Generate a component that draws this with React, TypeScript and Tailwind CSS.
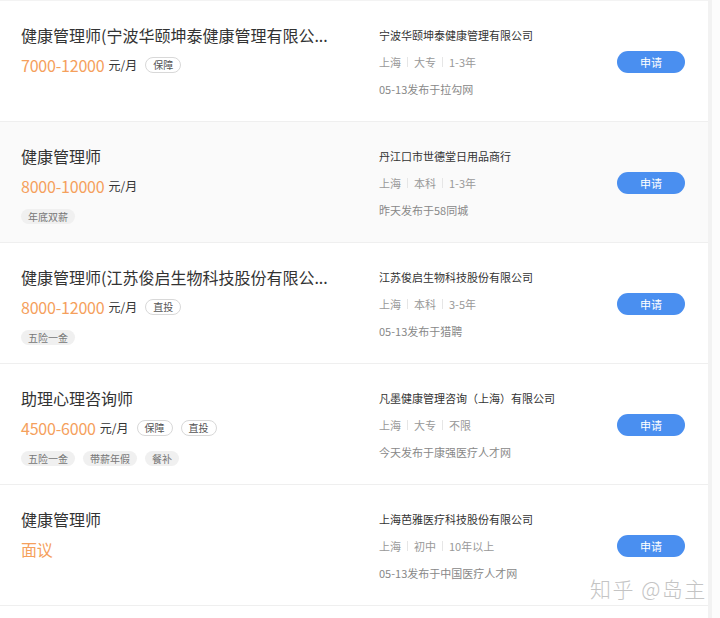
import React from "react";

type Job = {
  title: string;
  salary: string;
  unit?: boolean;
  badges: string[];
  tags: string[];
  company: string;
  meta: string[];
  source: string;
  gray?: boolean;
};

const jobs: Job[] = [
  {
    title: "健康管理师(宁波华颐坤泰健康管理有限公...",
    salary: "7000-12000",
    unit: true,
    badges: ["保障"],
    tags: [],
    company: "宁波华颐坤泰健康管理有限公司",
    meta: ["上海", "大专", "1-3年"],
    source: "05-13发布于拉勾网",
  },
  {
    title: "健康管理师",
    salary: "8000-10000",
    unit: true,
    badges: [],
    tags: ["年底双薪"],
    company: "丹江口市世德堂日用品商行",
    meta: ["上海", "本科", "1-3年"],
    source: "昨天发布于58同城",
    gray: true,
  },
  {
    title: "健康管理师(江苏俊启生物科技股份有限公...",
    salary: "8000-12000",
    unit: true,
    badges: ["直投"],
    tags: ["五险一金"],
    company: "江苏俊启生物科技股份有限公司",
    meta: ["上海", "本科", "3-5年"],
    source: "05-13发布于猎聘",
  },
  {
    title: "助理心理咨询师",
    salary: "4500-6000",
    unit: true,
    badges: ["保障", "直投"],
    tags: ["五险一金", "带薪年假", "餐补"],
    company: "凡墨健康管理咨询（上海）有限公司",
    meta: ["上海", "大专", "不限"],
    source: "今天发布于康强医疗人才网",
  },
  {
    title: "健康管理师",
    salary: "面议",
    unit: false,
    badges: [],
    tags: [],
    company: "上海芭雅医疗科技股份有限公司",
    meta: ["上海", "初中", "10年以上"],
    source: "05-13发布于中国医疗人才网",
  },
];

const font = { fontFamily: '"Noto Sans CJK SC", "Noto Sans", sans-serif' };

function Row({ job }: { job: Job }) {
  return (
    <div className={`relative h-[121px] border-b border-[#efefef] ${job.gray ? "bg-[#fafafa]" : "bg-white"}`}>
      <div className="flex h-full">
        <div className="w-[379px] pl-[21px] pt-[22px] flex flex-col">
          <div className="text-[16px] leading-[24px] text-[#333] whitespace-nowrap">{job.title}</div>
          <div className="flex items-center mt-[6px] h-[24px]">
            <span className="text-[16px] text-[#f5a05c] leading-[24px] tracking-[-0.2px]">{job.salary}</span>
            {job.unit && <span className="text-[12px] text-[#333] ml-[4px]">元/月</span>}
            {job.badges.map((b) => (
              <span
                key={b}
                className="ml-[8px] h-[16px] px-[7px] rounded-full border border-[#d8d8d8] bg-white text-[10px] leading-[14px] text-[#555] flex items-center"
              >
                {b}
              </span>
            ))}
          </div>
          {job.tags.length > 0 && (
            <div className="flex gap-[8px] mt-[11px]">
              {job.tags.map((t) => (
                <span
                  key={t}
                  className="h-[15px] px-[7px] rounded-full bg-[#f0f0f0] text-[10px] leading-[15px] text-[#777]"
                >
                  {t}
                </span>
              ))}
            </div>
          )}
        </div>
        <div className="flex-1 pt-[25px] flex flex-col">
          <div className="text-[11px] leading-[18px] text-[#333] whitespace-nowrap">{job.company}</div>
          <div className="flex items-center mt-[9px] text-[11px] leading-[18px] text-[#999]">
            {job.meta.map((m, i) => (
              <React.Fragment key={i}>
                {i > 0 && <span className="mx-[6px] h-[10px] w-px bg-[#e6e6e6]" />}
                <span>{m}</span>
              </React.Fragment>
            ))}
          </div>
          <div className="mt-[9px] text-[11px] leading-[18px] text-[#888]">{job.source}</div>
        </div>
        <div className="w-[91px] flex items-center pt-[1px]">
          <button className="w-[68px] h-[22px] rounded-full bg-[#4a8ff0] text-white text-[11px] leading-[22px]">
            申请
          </button>
        </div>
      </div>
    </div>
  );
}

export default function App() {
  return (
    <div className="relative w-[720px] h-[618px] bg-white overflow-hidden flex" style={font}>
      <div className="w-[708px] flex flex-col border-t border-[#f3f3f3]">
        {jobs.map((j, i) => (
          <Row key={i} job={j} />
        ))}
      </div>
      <div className="w-[4px] bg-[#f2f2f2]" />
      <div className="flex-1 bg-[#fcfcfc]" />
      <div
        className="absolute left-[590px] top-[573px] text-[21px] leading-[30px] tracking-[1.5px] text-[#c4c4c4] whitespace-nowrap font-light"
        style={{ textShadow: "0 0 2px #fff" }}
      >
        知乎 @岛主
      </div>
    </div>
  );
}
